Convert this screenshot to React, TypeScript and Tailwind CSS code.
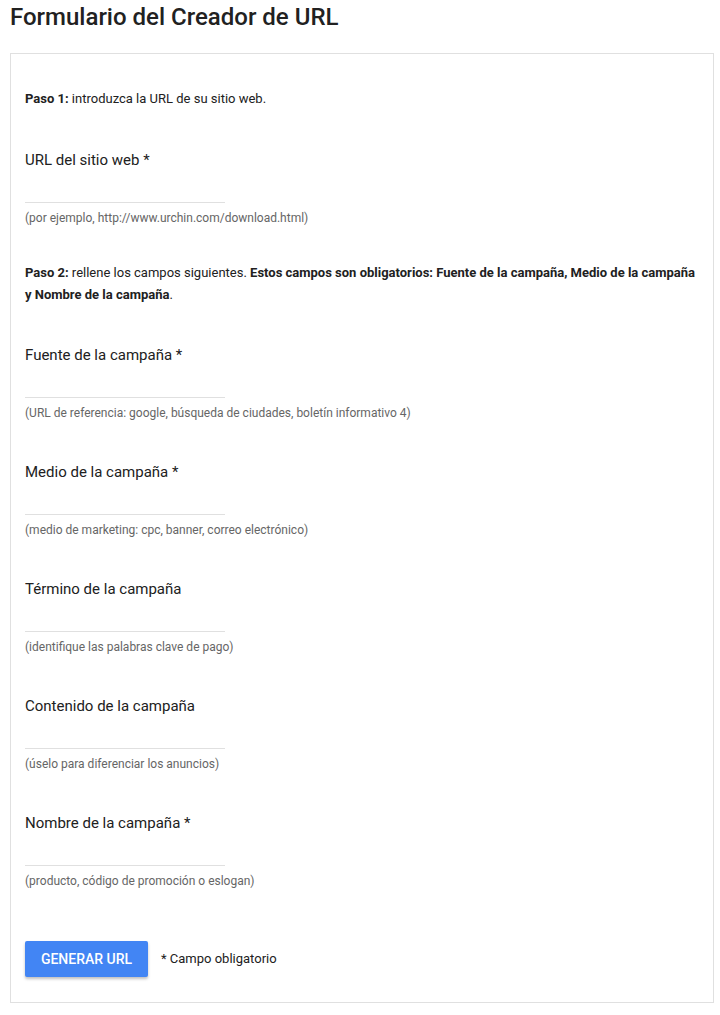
import React from 'react';

type Field = {
  label: string;
  hint: string;
  required?: boolean;
};

const campaignFields: Field[] = [
  { label: 'Fuente de la campaña', hint: '(URL de referencia: google, búsqueda de ciudades, boletín informativo 4)', required: true },
  { label: 'Medio de la campaña', hint: '(medio de marketing: cpc, banner, correo electrónico)', required: true },
  { label: 'Término de la campaña', hint: '(identifique las palabras clave de pago)' },
  { label: 'Contenido de la campaña', hint: '(úselo para diferenciar los anuncios)' },
  { label: 'Nombre de la campaña', hint: '(producto, código de promoción o eslogan)', required: true },
];

const FormField: React.FC<{ field: Field; className?: string }> = ({ field, className = '' }) => (
  <div className={className}>
    <label className="block text-[15px] leading-[24px] text-[#212121]">
      {field.label}
      {field.required && ' *'}
    </label>
    <input
      type="text"
      className="mt-[6px] block h-[25px] w-[200px] border-b border-[#e0e0e0] bg-transparent text-[14px] outline-none"
    />
    <p className="mt-[7px] text-[12px] leading-[16px] text-[#666666]">{field.hint}</p>
  </div>
);

export default function App() {
  return (
    <div className="min-h-[1015px] bg-white font-['Roboto',sans-serif] text-[#212121]">
      <h1 className="px-[10px] pt-[1px] text-[24px] font-medium leading-[32px] text-[#212121]">
        Formulario del Creador de URL
      </h1>

      <form className="ml-[10px] mt-[20px] w-[704px] border border-[#e0e0e0] px-[14px] pb-[25px] pt-[34px]">
        <p className="text-[13px] leading-[22px]">
          <span className="font-bold">Paso 1:</span> introduzca la URL de su sitio web.
        </p>

        <FormField
          className="mt-[38px]"
          field={{ label: 'URL del sitio web', hint: '(por ejemplo, http://www.urchin.com/download.html)', required: true }}
        />

        <p className="mt-[36px] whitespace-nowrap text-[13px] leading-[22px]">
          <span className="font-bold">Paso 2:</span> rellene los campos siguientes.{' '}
          <span className="font-bold">Estos campos son obligatorios: Fuente de la campaña, Medio de la campaña</span>
          <br />
          <span className="font-bold">y Nombre de la campaña</span>.
        </p>

        {campaignFields.map((field, i) => (
          <FormField key={field.label} field={field} className={i === 0 ? 'mt-[37px]' : 'mt-[39px]'} />
        ))}

        <div className="mt-[52px] flex items-center">
          <button
            type="button"
            className="h-[36px] w-[123px] rounded-[2px] bg-[#4285f4] text-[14px] font-medium uppercase text-white shadow-[0_2px_3px_rgba(0,0,0,0.25)]"
          >
            Generar URL
          </button>
          <span className="ml-[13px] text-[13px]">* Campo obligatorio</span>
        </div>
      </form>
    </div>
  );
}
